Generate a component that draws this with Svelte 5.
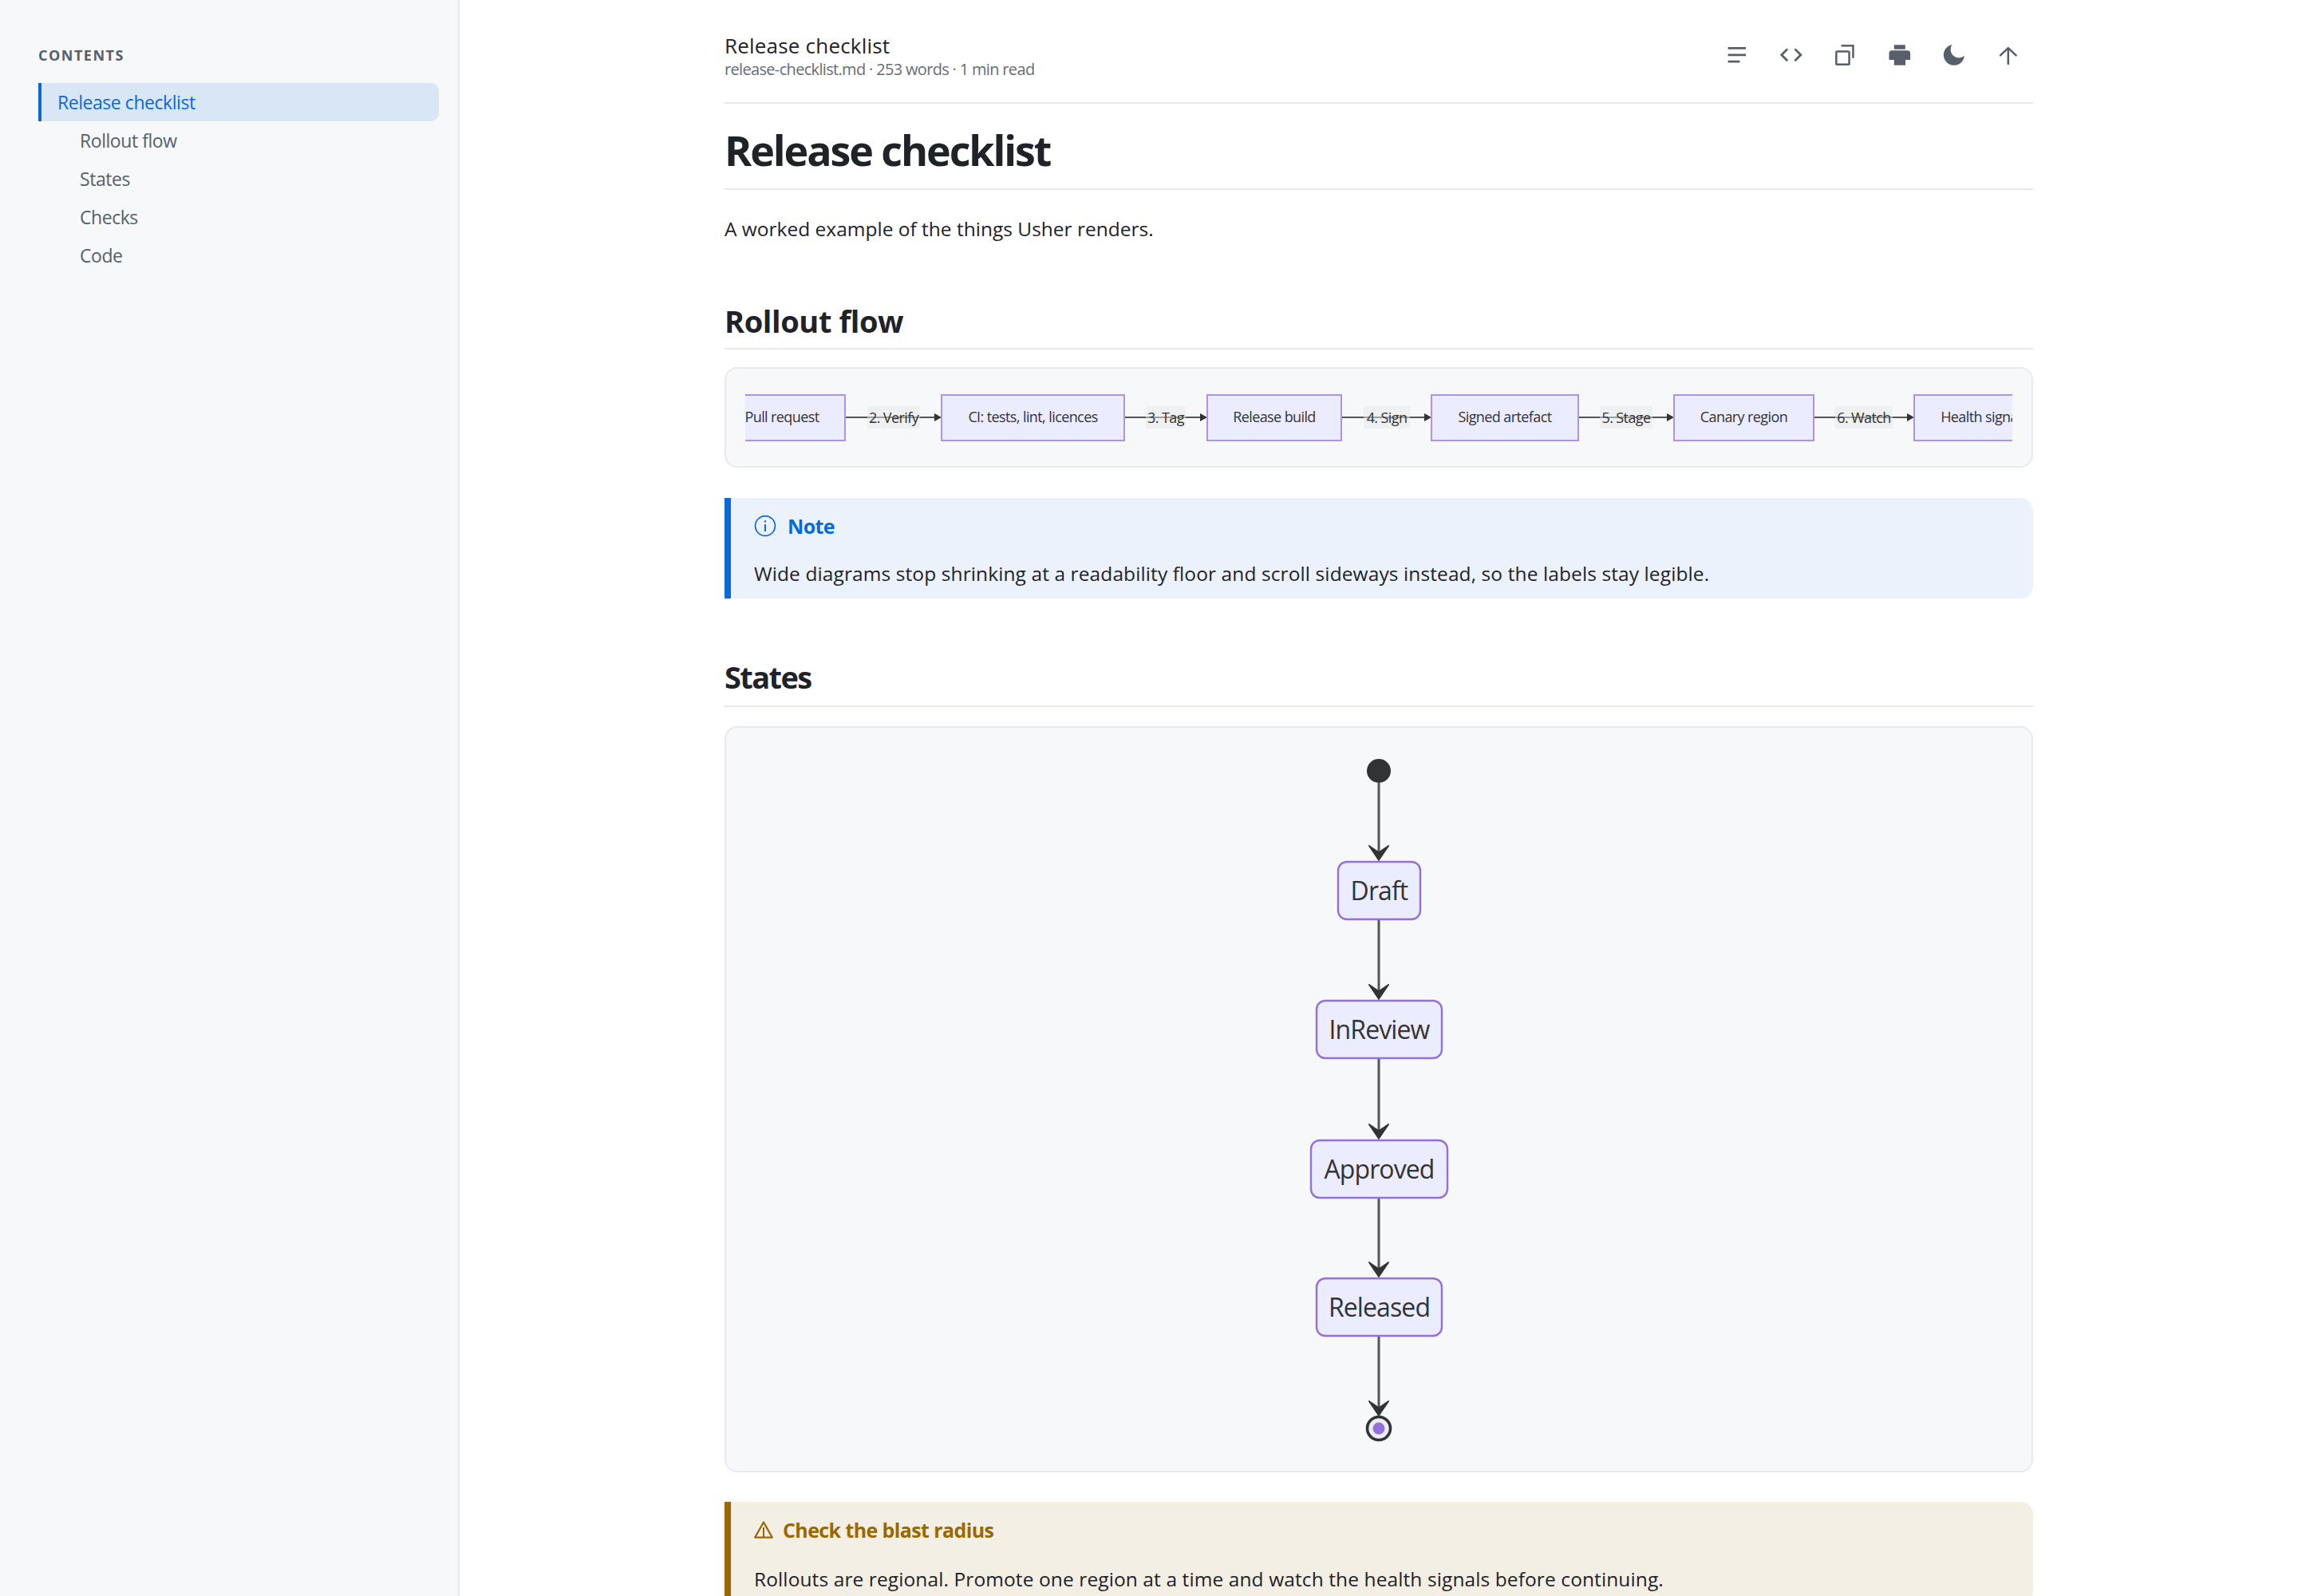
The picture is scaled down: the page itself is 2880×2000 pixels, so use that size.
<script>
  const toc = [
    { label: 'Release checklist', active: true },
    { label: 'Rollout flow' },
    { label: 'States' },
    { label: 'Checks' },
    { label: 'Code' }
  ];

  // page coordinates, the svg viewBox is set to the same space
  const flowNodes = [
    { label: 'Pull request', x: 901, w: 158 },
    { label: 'CI: tests, lint, licences', x: 1180, w: 229 },
    { label: 'Release build', x: 1513, w: 168 },
    { label: 'Signed artefact', x: 1794, w: 184 },
    { label: 'Canary region', x: 2098, w: 175 },
    { label: 'Health signals', x: 2399, w: 175 }
  ];
  const flowLabels = [
    { label: '2. Verify', x: 1087, w: 66, from: 1059, to: 1180 },
    { label: '3. Tag', x: 1436, w: 50, from: 1409, to: 1513 },
    { label: '4. Sign', x: 1709, w: 58, from: 1681, to: 1794 },
    { label: '5. Stage', x: 2005, w: 66, from: 1978, to: 2098 },
    { label: '6. Watch', x: 2300, w: 72, from: 2273, to: 2399 }
  ];

  const states = [
    { label: 'Draft', x: 1677, w: 103, y: 1080 },
    { label: 'InReview', x: 1650, w: 157, y: 1254 },
    { label: 'Approved', x: 1643, w: 171, y: 1429 },
    { label: 'Released', x: 1650, w: 157, y: 1602 }
  ];
  const stateEdges = [
    { from: 981, to: 1079 },
    { from: 1153, to: 1253 },
    { from: 1327, to: 1428 },
    { from: 1502, to: 1601 },
    { from: 1675, to: 1775 }
  ];
</script>

<div class="page">
  <aside class="sidebar">
    <div class="toc-title">CONTENTS</div>
    <nav class="toc">
      {#each toc as item}
        <div class="toc-item" class:active={item.active}>{item.label}</div>
      {/each}
    </nav>
  </aside>

  <main class="main">
    <div class="content">
      <header class="topbar">
        <div class="doc">
          <div class="doc-title">Release checklist</div>
          <div class="doc-meta">release-checklist.md · 253 words · 1 min read</div>
        </div>
        <div class="tools">
          <svg class="tool" viewBox="0 0 24 24"><path d="M4 5h16v2H4zM4 11h16v2H4zM4 17h10.6v2H4z" /></svg>
          <svg class="tool" viewBox="0 0 24 24"><path d="M9.4 16.6 4.8 12l4.6-4.6L8 6l-6 6 6 6 1.4-1.4zm5.2 0 4.6-4.6-4.6-4.6L16 6l6 6-6 6-1.4-1.4z" /></svg>
          <svg class="tool" viewBox="0 0 24 24"><rect class="line" x="3.8" y="9" width="11.6" height="11.6" rx="1" /><path class="line" d="M8.3 3.8h10.6v11" /></svg>
          <svg class="tool" viewBox="0 0 24 24"><path d="M7 3h10v4H7zM5 8h14a2.5 2.5 0 0 1 2.5 2.5v6h-4.3v4.8H7v-4.8H2.5v-6A2.5 2.5 0 0 1 5 8z" /></svg>
          <svg class="tool" viewBox="0 0 24 24"><path d="M10.3 2.9A9.3 9.3 0 1 0 21.3 12.9 7.5 7.5 0 0 1 10.3 2.9z" /></svg>
          <svg class="tool" viewBox="0 0 24 24"><path class="line" stroke-linecap="round" stroke-linejoin="round" d="M12 20V6M5 12.4 12 5.8l7 6.6" /></svg>
        </div>
      </header>

      <h1>Release checklist</h1>
      <p class="lead">A worked example of the things Usher renders.</p>

      <h2>Rollout flow</h2>
      <div class="diagram flow">
        <svg width="1588" height="74" viewBox="934 486 1588 74">
          {#each flowLabels as e}
            <line class="edge" x1={e.from} y1="523" x2={e.to - 6} y2="523" />
            <path class="tip" d="M{e.to - 9} 518 L{e.to} 523 L{e.to - 9} 528 Z" />
            <rect class="edge-bg" x={e.x} y="509" width={e.w} height="28" />
            <text class="flow-text" x={e.x + e.w / 2} y="530">{e.label}</text>
          {/each}
          {#each flowNodes as n}
            <rect class="node" x={n.x} y="495" width={n.w} height="57" />
            <text class="flow-text" x={n.x + n.w / 2} y="529">{n.label}</text>
          {/each}
        </svg>
      </div>

      <div class="callout note">
        <div class="callout-head">
          <svg class="note-icon" viewBox="0 0 28 28">
            <circle cx="14" cy="14" r="12.4" fill="none" stroke="currentColor" stroke-width="1.7" />
            <path d="M13 12h2v9h-2zM13 7.2h2v2.4h-2z" fill="currentColor" />
          </svg>
          <span>Note</span>
        </div>
        <div class="callout-body">Wide diagrams stop shrinking at a readability floor and scroll sideways instead, so the labels stay legible.</div>
      </div>

      <h2 class="states-title">States</h2>
      <div class="diagram states">
        <svg width="656" height="931" viewBox="1400 912 656 931">
          <circle cx="1728" cy="966" r="15" fill="#333" />
          {#each stateEdges as e}
            <line class="state-edge" x1="1728" y1={e.from} x2="1728" y2={e.to - 8} />
            <path class="barb" d="M1728 {e.to - 1} L1715.5 {e.to - 19.5} L1728 {e.to - 11} L1740.5 {e.to - 19.5} Z" />
          {/each}
          {#each states as s}
            <rect class="state" x={s.x} y={s.y} width={s.w} height="72" rx="11" />
            <text class="state-text" x="1728.5" y={s.y + 48}>{s.label}</text>
          {/each}
          <circle cx="1728" cy="1790" r="14.5" fill="#ececff" stroke="#333" stroke-width="3.6" />
          <circle cx="1728" cy="1790" r="7.5" fill="#9370db" />
        </svg>
      </div>

      <div class="callout warn">
        <div class="callout-head">
          <svg class="warn-icon" viewBox="0 0 24 24">
            <path d="M12 2.5 22.8 21.6H1.2z" fill="none" stroke="currentColor" stroke-width="2.2" stroke-linejoin="round" />
            <path d="M11 9h2v12h-2z" fill="currentColor" />
          </svg>
          <span>Check the blast radius</span>
        </div>
        <div class="callout-body">Rollouts are regional. Promote one region at a time and watch the health signals before continuing.</div>
      </div>
    </div>
  </main>
</div>

<style>
  :global(body) {
    margin: 0;
    background: #fff;
  }

  .page {
    display: flex;
    height: 2000px;
    overflow: hidden;
    font-family: "Open Sans", "Noto Sans", sans-serif;
    color: #1f2328;
  }

  .sidebar {
    flex: 0 0 576px;
    box-sizing: border-box;
    padding: 56px 24px 0 48px;
    background: #f6f8fa;
    border-right: 2px solid #e7eaee;
  }

  .toc-title {
    height: 26px;
    line-height: 26px;
    font-size: 18px;
    font-weight: 700;
    letter-spacing: 1.5px;
    color: #57606a;
  }

  .toc {
    margin-top: 22px;
  }

  .toc-item {
    height: 48px;
    line-height: 48px;
    padding-left: 52px;
    font-size: 23px;
    letter-spacing: -0.45px;
    color: #57606a;
  }

  .toc-item.active {
    padding-left: 20px;
    border-left: 4px solid #0969da;
    border-radius: 0 10px 10px 0;
    background: #d9e6f6;
    color: #0969da;
  }

  .main {
    flex: 1;
  }

  .content {
    width: 1640px;
    margin: 0 auto;
  }

  .topbar {
    display: flex;
    justify-content: space-between;
    box-sizing: border-box;
    height: 130px;
    padding-top: 40px;
    border-bottom: 2px solid #e5e9ed;
  }

  .doc-title {
    line-height: 34px;
    font-size: 26px;
    font-weight: 500;
    letter-spacing: 0.2px;
  }

  .doc-meta {
    line-height: 26px;
    font-size: 20px;
    letter-spacing: -0.67px;
    color: #656d76;
  }

  .tools {
    display: flex;
    gap: 34.4px;
    margin-top: 12px;
    margin-right: 14px;
    height: 34px;
  }

  .tool {
    width: 33.6px;
    height: 33.6px;
    fill: #57606a;
  }

  .tool .line {
    fill: none;
    stroke: #57606a;
    stroke-width: 1.8;
  }

  h1 {
    margin: 22px 0 0;
    padding-bottom: 12px;
    line-height: 72px;
    font-size: 52px;
    font-weight: 700;
    letter-spacing: -2.1px;
    border-bottom: 2px solid #e5e9ed;
  }

  .lead {
    margin: 27px 0 0;
    line-height: 44px;
    font-size: 24.5px;
  }

  h2 {
    margin: 67px 0 0;
    padding-bottom: 8px;
    line-height: 52px;
    font-size: 38px;
    font-weight: 700;
    letter-spacing: -0.4px;
    border-bottom: 2px solid #e5e9ed;
  }

  .diagram {
    margin-top: 22px;
    box-sizing: border-box;
    border: 2px solid #e7eaee;
    border-radius: 16px;
    background: #f6f8fa;
  }

  .diagram svg {
    display: block;
  }

  .flow {
    height: 126px;
    padding: 24px;
  }

  .edge {
    stroke: #555;
    stroke-width: 2;
  }

  .tip {
    fill: #333;
  }

  .edge-bg {
    fill: #e8e8e8;
    fill-opacity: 0.5;
  }

  .node {
    fill: #ececff;
    stroke: #af93e8;
    stroke-width: 2;
  }

  .flow-text {
    font-size: 18px;
    letter-spacing: -0.6px;
    text-anchor: middle;
    fill: #333;
  }

  .callout {
    margin-top: 38px;
    box-sizing: border-box;
    padding: 17px 28px 9px 29px;
    border-left: 8px solid #0969da;
    border-radius: 0 16px 16px 0;
    background: #ebf2fc;
  }

  .callout-head {
    display: flex;
    align-items: center;
    gap: 14px;
    line-height: 36px;
    height: 36px;
    font-size: 25px;
    font-weight: 700;
    letter-spacing: -0.6px;
    color: #0969da;
  }

  .note-icon {
    width: 28px;
    height: 28px;
  }

  .callout-body {
    margin-top: 20px;
    line-height: 44px;
    font-size: 24.5px;
    letter-spacing: 0.1px;
  }

  .states-title {
    margin-top: 72px;
    padding-bottom: 10px;
    letter-spacing: -1.6px;
  }

  .states {
    height: 935px;
    margin-top: 24px;
  }

  .states svg {
    margin: 0 auto;
  }

  .state-edge {
    stroke: #555;
    stroke-width: 3;
  }

  .barb {
    fill: #333;
    stroke: #333;
    stroke-width: 1.5;
  }

  .state {
    fill: #ececff;
    stroke: #9370db;
    stroke-width: 2.4;
  }

  .state-text {
    font-size: 32px;
    letter-spacing: -0.9px;
    text-anchor: middle;
    fill: #333;
  }

  .warn {
    margin-top: 37px;
    border-left-color: #9a6700;
    background: #f4efe4;
  }

  .warn .callout-head {
    gap: 12px;
    color: #9a6700;
  }

  .warn .callout-body {
    margin-top: 22px;
  }

  .warn-icon {
    width: 24px;
    height: 24px;
  }
</style>
